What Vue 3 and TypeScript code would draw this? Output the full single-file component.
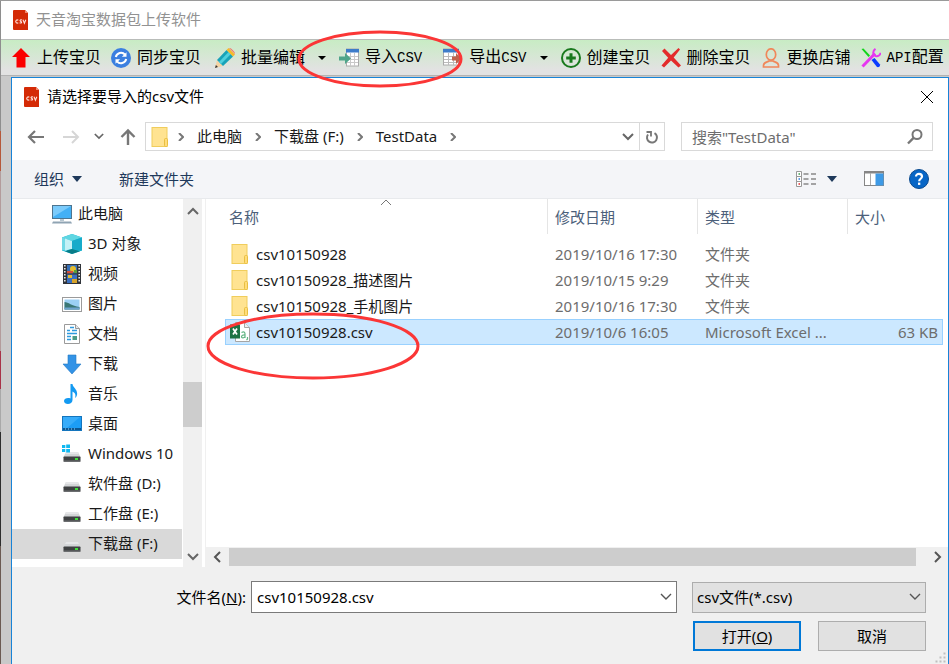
<script setup lang="ts">
import { ref } from 'vue'

interface Tool { icon: string; label: string; latin?: string; tail?: string; menu?: boolean; spaced?: boolean }
interface Place { icon: string; label: string; root?: boolean }
interface FileRow { icon: string; name: string; date: string; type: string; size: string }

const hdd = `<path d="M4 8h12l2.500 5h-17z" fill="#d3d5d7"/><path d="M4 8h12l1 2H3z" fill="#e6e7e8"/><rect x="1.500" y="12.500" width="17" height="5.500" rx=".8" fill="#3f4142"/><rect x="2" y="16.500" width="16" height="1.500" fill="#6c6e70"/><rect x="13" y="14" width="3" height="2" fill="#3ee03a"/>`

const icons: Record<string, string> = {
  csvApp: `<path d="M3 0h11l3 3v17H3a1 1 0 0 1-1-1V1a1 1 0 0 1 1-1z" fill="#d42a06"/><path d="M14 0l3 3h-3z" fill="#f08a70"/><path d="M7.300 10.200a1.600 1.600 0 1 0 0 2.600M11 10c-2-.8-2.600.8-1.200 1.400s.8 2.200-1.200 1.400M12 9.800l1.400 3.400 1.400-3.400" fill="none" stroke="#ffe3dc" stroke-width="1.100"/>`,
  upload: `<path d="M10 0l9 9h-4.500v10.500h-9V9H1z" fill="#fb0000"/>`,
  sync: `<circle cx="10" cy="10" r="10" fill="#3b7fe0"/><path d="M4.800 9a5.300 5.300 0 0 1 9.200-2.300M15.200 11a5.300 5.300 0 0 1-9.200 2.300" fill="none" stroke="#fff" stroke-width="2"/><path d="M15.500 4.200v4.600h-4.600zM4.500 15.800v-4.600h4.600z" fill="#fff"/>`,
  pencil: `<path d="M0 20l2-8 6 6z" fill="#f4d3a4"/><path d="M0 20l.9-3 2.100 2.100z" fill="#333"/><path d="M2 12L11.500 2l6.500 6.500L8 18z" fill="#18a3b8"/><path d="M4 14L13.500 4l2.200 2.200L6 16z" fill="#4fd0dd"/><path d="M11.500 2l2-2 6.500 6.500-2 2z" fill="#f6b92c"/><path d="M14 0c1.500-.8 6.800 4.500 6 6z" fill="#f0776c"/>`,
  importCsv: `<rect x="7.500" y="1" width="12" height="17" fill="#fff" stroke="#aaa"/><path d="M11.500 5v13M15.500 5v13M8 8.500h11M8 11.500h11M8 14.500h11" stroke="#c9c9c9"/><rect x="7" y="1" width="13" height="3.500" fill="#3d7cc9"/><path d="M0 8.500h6V5l6 5.500-6 5.500v-3.500H0z" fill="#4fa58a"/>`,
  exportCsv: `<rect x=".5" y="1" width="15" height="16" fill="#fff" stroke="#aaa"/><path d="M5.500 5v12M10.500 5v12M1 8.500h14M1 11.500h14M1 14.500h14" stroke="#bbb"/><rect x="0" y="1" width="16" height="3.500" fill="#3d7cc9"/><path d="M9 8.500h4V5l5.500 5.500L13 16v-3.500H9z" fill="#c0614c"/>`,
  add: `<circle cx="10" cy="10" r="9" fill="none" stroke="#19791d" stroke-width="2"/><path d="M10 5.200v9.600M5.200 10h9.600" stroke="#19791d" stroke-width="3"/>`,
  remove: `<path d="M1 3l2.500-2.500 6.500 6.500L17.500 0l1.500 1.500-6.300 8L20 17.500l-2.500 2L10 12.500l-7 7L.5 17.500l6.700-7.800z" fill="#e32b2b"/>`,
  person: `<ellipse cx="10" cy="6.500" rx="4.700" ry="5.700" fill="none" stroke="#f0875a" stroke-width="1.700"/><path d="M2.500 19v-1.500c0-3.500 4-3.300 5.500-4.500h4c1.500 1.200 5.500 1 5.500 4.500V19z" fill="none" stroke="#f0875a" stroke-width="1.700"/>`,
  tools: `<path d="M.5 1l2-.5 6.500 7-1.500 1.500z" fill="#12d41a"/><path d="M10.500 12l3-2 5.500 6.500c.5 2-1.500 3-3 2.500z" fill="#0b3cff"/><path d="M1.500 18.500L14 5.500" stroke="#e637f0" stroke-width="3"/><path d="M14.500.8c-3 2-3 6 .2 7.200 2.500.6 4.500-1 4.800-3.200" fill="none" stroke="#e637f0" stroke-width="2"/>`,
  folder: `<rect x="2" y=".5" width="15" height="19" fill="#ffe391" stroke="#f0cd5c"/><rect x="14.500" y="11.500" width="3" height="8" rx="1" fill="#ffdc7a" stroke="#e9bf41"/>`,
  excel: `<path d="M5.500.5h9l5 5v14h-14z" fill="#fff" stroke="#a5a5a5"/><path d="M14.500.5v5h5" fill="#eee" stroke="#a5a5a5"/><rect x="0" y="2.500" width="10" height="14" fill="#1d7345"/><path d="M3 6.500l4 6M7 6.500l-4 6" stroke="#fff" stroke-width="1.700"/><path d="M11.500 10.500c3-1.300 3.500 0 3.500 1.500v4M15 12.800c-4-.3-4.500 3-2 3 1.200 0 2-.7 2-1.500M17.500 15v2l-1 1" fill="none" stroke="#62b583" stroke-width="1.200"/>`,
  computer: `<rect x=".5" y="1.500" width="19" height="13" fill="#43b0f5" stroke="#4d7590"/><path d="M1 2h18L1 13z" fill="#7bcbfb"/><path d="M8 15h4v2H8z" fill="#b6c6d0"/><path d="M1 17.500h18l1 2H0z" fill="#8fa4b3"/>`,
  cube: `<path d="M10 0l10 3.500v13L10 20 0 16.500v-13z" fill="#17b6cf"/><path d="M10 0l10 3.500L10 7 0 3.500z" fill="#5fd6e2"/><path d="M0 3.500L5 5v12l-5-1z" fill="#72d9e6"/><path d="M3 4.500L10 7v8l-7 1.500z" fill="#c4f1f6"/><path d="M10 7l10-3.500v13L10 15z" fill="#17abca"/><path d="M3 17.200l7-2.200 8 2.200-8 2.800z" fill="#087c88"/>`,
  video: `<rect x="1" y="0" width="18" height="20" fill="#30343a"/><path d="M2.800 1v18M17.200 1v18" stroke="#e8e8e8" stroke-width="1.600" stroke-dasharray="1.500 1.500"/><rect x="5" y="1" width="10" height="8.300" fill="#3770b8"/><rect x="5" y="10.500" width="10" height="8.500" fill="#3a6fc0"/><circle cx="11" cy="5" r="3" fill="#e6bd2e"/><path d="M5 7h6v2.300H5z" fill="#d44f3a"/><path d="M6 11h4v3H6z" fill="#e6bd2e"/><path d="M10 15h5v4h-5z" fill="#d6a32b"/><path d="M12 6h3v3h-3z" fill="#5a9e3c"/>`,
  picture: `<rect x=".5" y="3.500" width="19" height="14" fill="#fff" stroke="#9b9b9b"/><rect x="2.500" y="5.500" width="15" height="10" fill="#9bd0f5"/><path d="M2.500 8c4 0 7 4 15 5v2.500h-15z" fill="#3a7775"/><path d="M2.500 13.500h15v2h-15z" fill="#6ea4cf"/>`,
  document: `<path d="M2.500.5h11l4 4v15h-15z" fill="#fff" stroke="#9a9a9a"/><path d="M13.500.5v4h4" fill="#e7e7e7" stroke="#9a9a9a"/><path d="M8 3.500h4M5 6.500h3M10 6.500h5M5 9.500h10M5 12.500h4M5 15.500h4" stroke="#2e9ade" stroke-width="1.500"/><path d="M10.500 12h4.500v4h-4.500z" fill="#4b9a87"/>`,
  download: `<path d="M6 1h8v9h5l-9 10-9-10h5z" fill="#3393e6" stroke="#2278c4" stroke-width=".6"/>`,
  music: `<path d="M8.500 0h2c.3 4 5.500 5 4.500 11-.4 1.500-1.200 2.500-2 3 1.300-4-.5-5.500-2.500-6.500V16c0 5-8.500 5-8.500 1 0-2.800 4-3.600 6.500-2.500z" fill="#139af2"/>`,
  desktop: `<rect x=".5" y="2.500" width="19" height="14" fill="#1c9df6" stroke="#1475bd"/><path d="M1 3h17L5 14H1z" fill="#37acfa"/><path d="M1 15h18" stroke="#0b5793" stroke-width="2"/><path d="M3 15h12" stroke="#9fd4f7" stroke-dasharray="1 2"/>`,
  windows: hdd + `<path d="M0 1h3.300v3H0zM4.200.5H8V4H4.200zM0 4.900h3.300v3H0zM4.200 4.900H8v3.500H4.200z" fill="#11b8f0"/>`,
  disk: hdd,
  left: `<path d="M18 10H3.500M9 4l-6 6 6 6" fill="none" stroke="#777" stroke-width="2.200"/>`,
  right: `<path d="M3 10h14.500M12 4l6 6-6 6" fill="none" stroke="#d6d6d6" stroke-width="2"/>`,
  up: `<path d="M10 18V4M3.500 10L10 3.500l6.500 6.500" fill="none" stroke="#777" stroke-width="2.400"/>`,
  refresh: `<path d="M12.500 6.200a5 5 0 1 1-6.500 1.300" fill="none" stroke="#777" stroke-width="2"/><path d="M4.500 5H9v4.500" fill="none" stroke="#777" stroke-width="1.800"/>`,
  search: `<circle cx="12" cy="7.500" r="4.500" fill="none" stroke="#777" stroke-width="2"/><path d="M8.800 10.700L3 16.500" stroke="#777" stroke-width="2.400"/>`,
  views: `<path d="M.5 2.500h5v5h-5zM.5 7.500h5v5h-5zM.5 12.500h5v5h-5z" fill="#fff" stroke="#999"/><path d="M2.500 5h1.500" stroke="#3a9b4e" stroke-width="1.500"/><path d="M2.500 10h1.500" stroke="#2a7de0" stroke-width="1.500"/><path d="M2.500 15h1.500" stroke="#e02a2a" stroke-width="1.500"/><path d="M7.500 5h5M15 5h5M7.500 10h5M15 10h5M7.500 15h5M15 15h5" stroke="#888" stroke-width="1.400"/>`,
  pane: `<rect x=".5" y="2.500" width="19" height="14" fill="#fff" stroke="#868686"/><path d="M1 3.500h18" stroke="#868686" stroke-width="2"/><path d="M6.500 4v12" stroke="#aaa"/><rect x="11.500" y="4.500" width="8" height="12" fill="#3e9ae6"/>`,
  help: `<circle cx="10" cy="10" r="9.500" fill="#0866c6" stroke="#0b4a8f"/><path d="M7 7.600C7 3.800 13 4 13 7.500c0 2.300-2.800 2.200-2.800 4.700" fill="none" stroke="#fff" stroke-width="2.200"/><rect x="9" y="13.600" width="2.300" height="2.300" fill="#fff"/>`,
}

const tools: Tool[] = [
  { icon: 'upload', label: '上传宝贝' },
  { icon: 'sync', label: '同步宝贝' },
  { icon: 'pencil', label: '批量编辑', menu: true },
  { icon: 'importCsv', label: '导入', latin: 'CSV', spaced: true },
  { icon: 'exportCsv', label: '导出', latin: 'CSV', menu: true },
  { icon: 'add', label: '创建宝贝' },
  { icon: 'remove', label: '删除宝贝' },
  { icon: 'person', label: '更换店铺' },
  { icon: 'tools', label: '', latin: 'API', tail: '配置' },
]

const crumbs = ['此电脑', '下载盘 (F:)', 'TestData']

const places: Place[] = [
  { icon: 'computer', label: '此电脑', root: true },
  { icon: 'cube', label: '3D 对象' },
  { icon: 'video', label: '视频' },
  { icon: 'picture', label: '图片' },
  { icon: 'document', label: '文档' },
  { icon: 'download', label: '下载' },
  { icon: 'music', label: '音乐' },
  { icon: 'desktop', label: '桌面' },
  { icon: 'windows', label: 'Windows 10' },
  { icon: 'disk', label: '软件盘 (D:)' },
  { icon: 'disk', label: '工作盘 (E:)' },
  { icon: 'disk', label: '下载盘 (F:)' },
]
const place = ref('下载盘 (F:)')

const files: FileRow[] = [
  { icon: 'folder', name: 'csv10150928', date: '2019/10/16 17:30', type: '文件夹', size: '' },
  { icon: 'folder', name: 'csv10150928_描述图片', date: '2019/10/15 9:29', type: '文件夹', size: '' },
  { icon: 'folder', name: 'csv10150928_手机图片', date: '2019/10/16 17:30', type: '文件夹', size: '' },
  { icon: 'excel', name: 'csv10150928.csv', date: '2019/10/6 16:05', type: 'Microsoft Excel ...', size: '63 KB' },
]
const fileName = ref('csv10150928.csv')
const query = ref('')
const filter = ref('csv')
</script>

<template>
  <div class="app">
    <header class="app-title">
      <svg class="icon" viewBox="0 0 20 20" v-html="icons.csvApp"></svg>
      <span class="label">天音淘宝数据包上传软件</span>
    </header>

    <nav class="toolbar">
      <div v-for="t in tools" :key="t.icon" class="tool-group" :class="{ split: t.menu, spaced: t.spaced }">
        <button class="tool" type="button">
          <svg class="icon" viewBox="0 0 20 20" v-html="icons[t.icon]"></svg>
          <span class="label">{{ t.label }}<span v-if="t.latin" class="latin">{{ t.latin }}</span>{{ t.tail }}</span>
        </button>
        <button v-if="t.menu" class="tool-menu" type="button" :aria-label="t.label">
          <svg class="tool-caret" viewBox="0 0 8 4"><path d="M0 0h8L4 4z" /></svg>
        </button>
      </div>
      <svg class="mark mark-import" viewBox="0 0 166 58" preserveAspectRatio="none">
        <ellipse cx="83" cy="29" rx="81" ry="27" />
      </svg>
    </nav>

    <main class="workspace">
      <section class="dialog" role="dialog" aria-labelledby="dialog-title">
        <header class="dialog-title">
          <svg class="icon" viewBox="0 0 20 20" v-html="icons.csvApp"></svg>
          <h1 id="dialog-title" class="label">请选择要导入的csv文件</h1>
          <button class="close" type="button" aria-label="关闭">
            <svg viewBox="0 0 12 12"><path d="M0 0l12 12M12 0L0 12" /></svg>
          </button>
        </header>

        <div class="nav-row">
          <div class="history">
            <button type="button" aria-label="后退"><svg class="icon" viewBox="0 0 20 20" v-html="icons.left"></svg></button>
            <button type="button" aria-label="前进" disabled><svg class="icon" viewBox="0 0 20 20" v-html="icons.right"></svg></button>
            <button type="button" aria-label="最近"><svg class="chev small" viewBox="0 0 12 8"><path d="M1 1l5 5 5-5" /></svg></button>
            <button type="button" aria-label="上移"><svg class="icon" viewBox="0 0 20 20" v-html="icons.up"></svg></button>
          </div>
          <div class="address">
            <svg class="icon" viewBox="0 0 20 20" v-html="icons.folder"></svg>
            <svg class="sep" viewBox="0 0 6 8"><path d="M1 0l4 4-4 4" /></svg>
            <template v-for="c in crumbs" :key="c">
              <a class="label" href="#">{{ c }}</a>
              <svg class="sep" viewBox="0 0 6 8"><path d="M1 0l4 4-4 4" /></svg>
            </template>
            <button class="addr-drop" type="button" aria-label="历史位置">
              <svg class="chev" viewBox="0 0 12 8"><path d="M1 1l5 5 5-5" /></svg>
            </button>
            <button class="refresh" type="button" aria-label="刷新">
              <svg class="icon" viewBox="0 0 20 20" v-html="icons.refresh"></svg>
            </button>
          </div>
          <label class="search">
            <input v-model="query" type="text" placeholder="搜索&quot;TestData&quot;" aria-label="搜索" />
            <svg class="icon" viewBox="0 0 20 20" v-html="icons.search"></svg>
          </label>
        </div>

        <div class="commands">
          <button type="button">组织 <svg class="cmd-caret" viewBox="0 0 10 6"><path d="M0 0h10L5 6z" /></svg></button>
          <button class="new-folder" type="button">新建文件夹</button>
          <button class="views" type="button" aria-label="更改视图">
            <svg class="icon" viewBox="0 0 20 20" v-html="icons.views"></svg>
            <svg class="cmd-caret" viewBox="0 0 10 6"><path d="M0 0h10L5 6z" /></svg>
          </button>
          <button type="button" aria-label="预览窗格"><svg class="icon" viewBox="0 0 20 20" v-html="icons.pane"></svg></button>
          <button type="button" aria-label="帮助"><svg class="icon" viewBox="0 0 20 20" v-html="icons.help"></svg></button>
        </div>

        <div class="content">
          <ul class="tree">
            <li v-for="p in places" :key="p.label">
              <button type="button" :class="{ root: p.root, current: p.label === place }" @click="place = p.label">
                <svg class="icon" viewBox="0 0 20 20" v-html="icons[p.icon]"></svg>
                <span class="label">{{ p.label }}</span>
              </button>
            </li>
          </ul>
          <div class="vbar">
            <svg class="chev" viewBox="0 0 12 8"><path d="M1 7l5-5 5 5" /></svg>
            <div class="vtrack"><div class="vbefore"></div><div class="vthumb"></div><div class="vafter"></div></div>
            <svg class="chev" viewBox="0 0 12 8"><path d="M1 1l5 5 5-5" /></svg>
          </div>

          <div class="files">
            <table>
              <colgroup><col /><col class="c-date" /><col class="c-type" /><col class="c-size" /></colgroup>
              <thead>
                <tr>
                  <th>名称<svg class="sort" viewBox="0 0 12 7"><path d="M1 6l5-5 5 5" /></svg></th>
                  <th>修改日期</th>
                  <th>类型</th>
                  <th>大小</th>
                </tr>
              </thead>
              <tbody>
                <tr v-for="f in files" :key="f.name" :class="{ selected: f.name === fileName }" @click="fileName = f.name">
                  <td><div class="name"><svg class="icon" viewBox="0 0 20 20" v-html="icons[f.icon]"></svg><span>{{ f.name }}</span></div></td>
                  <td>{{ f.date }}</td>
                  <td>{{ f.type }}</td>
                  <td class="size">{{ f.size }}</td>
                </tr>
              </tbody>
            </table>
            <div class="hbar">
              <svg class="hchev" viewBox="0 0 8 12"><path d="M7 1L2 6l5 5" /></svg>
              <div class="hthumb"></div>
              <svg class="hchev" viewBox="0 0 8 12"><path d="M1 1l5 5-5 5" /></svg>
            </div>
            <svg class="mark mark-file" viewBox="0 0 214 68" preserveAspectRatio="none">
              <ellipse cx="107" cy="34" rx="105" ry="32" />
            </svg>
          </div>
        </div>

        <form class="footer" @submit.prevent>
          <label for="file-name">文件名(<u>N</u>):</label>
          <div class="combo">
            <input id="file-name" v-model="fileName" type="text" />
            <svg class="thin" viewBox="0 0 12 8"><path d="M1 1l5 5 5-5" /></svg>
          </div>
          <div class="combo filter">
            <select v-model="filter" aria-label="文件类型"><option value="csv">csv文件(*.csv)</option></select>
            <svg class="thin" viewBox="0 0 12 8"><path d="M1 1l5 5 5-5" /></svg>
          </div>
          <div class="actions">
            <button class="primary" type="submit">打开(<u>O</u>)</button>
            <button type="button">取消</button>
          </div>
        </form>
        <svg class="grip" viewBox="0 0 12 12"><path d="M8 0h3v3H8zM4 4h3v3H4zM8 4h3v3H8zM0 8h3v3H0zM4 8h3v3H4zM8 8h3v3H8z" /></svg>
      </section>
    </main>
  </div>
</template>

<style>
body {
  margin: 0;
}
</style>

<style scoped>
.app {
  box-sizing: border-box;
  display: flex;
  flex-direction: column;
  min-height: 100vh;
  overflow: hidden;
  border-top: 1px solid #9a9a9a;
  background: linear-gradient(#8e8e8e 0 130px, #b5583a 130px 170px, #b39c9c 170px 350px, #a83248 350px 388px, #a8a8a8 388px 431px, #2d2d2d 431px 545px, #6b5a52 545px) 0 0 / 1px 100% no-repeat, #c9c9c9;
  padding-left: 1px;
  color: #1a1a1a;
  font-family: "Noto Sans", "Noto Sans CJK SC", sans-serif;
  font-size: 15px;
  line-height: 20px;
}
button, input, select {
  margin: 0;
  padding: 0;
  border: 0;
  background: none;
  color: inherit;
  font: inherit;
}
svg {
  display: block;
  flex: none;
}
.icon {
  width: 20px;
  height: 20px;
}
.label {
  padding-bottom: 2px;
}
.app-title {
  display: flex;
  align-items: center;
  gap: 5px;
  height: 38px;
  padding-left: 10px;
  background: #fff;
  color: #929292;
}
.toolbar {
  position: relative;
  display: flex;
  height: 35px;
  padding-left: 5px;
  border-top: 1px solid #b9bcb9;
  border-bottom: 1px solid #b3b3b3;
  background: linear-gradient(#c8ecc4, #e2e2e2 85%);
  color: #000;
}
.tool-group {
  display: flex;
  flex: none;
}
.tool-group.split {
  margin-left: 4px;
}
.tool-group.spaced {
  margin-right: 7px;
}
.tool {
  display: flex;
  align-items: center;
  gap: 6px;
  padding: 0 5px;
  font-size: 16px;
  white-space: nowrap;
}
.latin {
  font-family: "Liberation Mono", monospace;
  font-size: 14px;
}
.tool-menu {
  display: flex;
  align-items: center;
  justify-content: center;
  width: 24px;
}
.tool-caret {
  width: 8px;
  height: 4px;
}
.mark {
  position: absolute;
  z-index: 5;
  pointer-events: none;
}
.mark ellipse {
  fill: none;
  stroke: #fb3636;
  stroke-width: 3;
}
.mark-import {
  left: 296px;
  top: -10px;
  width: 166px;
  height: 58px;
}
.mark-file {
  left: 0;
  top: 113px;
  width: 214px;
  height: 68px;
}
.workspace {
  display: flex;
  flex: 1;
  padding: 1px 0 0 10px;
}
.dialog {
  position: relative;
  display: flex;
  flex: 1;
  flex-direction: column;
  min-width: 0;
  border: 1px solid #1883d7;
  border-bottom: 0;
  background: #fff;
}
.dialog-title {
  display: flex;
  align-items: center;
  gap: 5px;
  height: 38px;
  padding: 0 15px 0 10px;
  color: #000;
}
.dialog-title h1 {
  flex: 1;
  margin: 0;
  font-size: 15px;
  font-weight: 400;
}
.close svg {
  width: 12px;
  height: 12px;
  fill: none;
  stroke: #000;
}
.nav-row {
  display: flex;
  align-items: center;
  gap: 16px;
  padding: 6px 15px 9px 14px;
}
.history {
  display: flex;
  align-items: center;
  gap: 14px;
  margin-right: -9px;
}
.chev {
  width: 12px;
  height: 8px;
  fill: none;
  stroke: #666;
  stroke-width: 2;
}
.chev.small {
  width: 10px;
  height: 7px;
}
.address {
  box-sizing: border-box;
  display: flex;
  flex: 1;
  align-items: center;
  gap: 13px;
  height: 29px;
  padding-left: 4px;
  border: 1px solid #d9d9d9;
}
.address a {
  color: #1a1a1a;
  text-decoration: none;
  white-space: nowrap;
}
.sep {
  width: 6px;
  height: 8px;
  fill: none;
  stroke: #777;
  stroke-width: 2;
}
.address > .icon {
  margin-right: -5px;
}
.addr-drop {
  margin-left: auto;
  margin-right: -8px;
}
.refresh {
  display: flex;
  align-items: center;
  align-self: stretch;
  padding: 0 2px;
  border-left: 1px solid #d9d9d9;
}
.search {
  box-sizing: border-box;
  display: flex;
  align-items: center;
  width: 252px;
  height: 29px;
  padding: 0 7px 0 10px;
  border: 1px solid #d9d9d9;
}
.search input {
  flex: 1;
  min-width: 0;
  outline: 0;
}
.search input::placeholder {
  color: #6d6d6d;
  opacity: 1;
}
.commands {
  display: flex;
  align-items: center;
  gap: 25px;
  height: 38px;
  padding: 0 19px 0 22px;
  border-bottom: 1px solid #e8eaed;
  background: #f4f5f8;
  color: #1e395b;
}
.commands button {
  display: flex;
  align-items: center;
  gap: 8px;
}
.commands .new-folder {
  margin-left: 12px;
}
.commands .views {
  gap: 11px;
  margin-right: 2px;
  margin-left: auto;
}
.cmd-caret {
  width: 10px;
  height: 6px;
  fill: #1e395b;
}
.content {
  display: flex;
  flex: 1;
}
.tree {
  width: 170px;
  margin: 0;
  padding: 0 0 8px;
  list-style: none;
}
.tree button {
  display: flex;
  align-items: center;
  gap: 6px;
  width: 100%;
  height: 30px;
  padding-left: 50px;
  white-space: nowrap;
}
.tree button.root {
  padding-left: 40px;
}
.tree button.current {
  background: #d9d9d9;
}
.vbar {
  display: flex;
  flex-direction: column;
  align-items: center;
  width: 19px;
  margin-left: 1px;
  padding: 8px 0 6px;
  background: #f0f0f0;
}
.vtrack {
  display: flex;
  flex: 1;
  flex-direction: column;
  align-self: stretch;
}
.vbefore {
  flex: 167;
}
.vthumb {
  flex: 45;
  background: #cdcdcd;
}
.vafter {
  flex: 126;
}
.files {
  position: relative;
  display: flex;
  flex: 1;
  flex-direction: column;
  justify-content: space-between;
  min-width: 0;
  margin-left: 3px;
  border-left: 1px solid #f0f0f0;
}
table {
  width: auto;
  margin: 0 5px 0 19px;
  border-spacing: 0;
  table-layout: fixed;
  color: #6d6d6d;
}
.c-date, .c-type {
  width: 150px;
}
.c-size {
  width: 96px;
}
th {
  position: relative;
  height: 35px;
  padding: 0 0 0 7px;
  border-left: 1px solid #e5e5e5;
  color: #4c607a;
  font-weight: 400;
  text-align: left;
}
th:first-child {
  padding-left: 4px;
  border-left: 0;
}
.sort {
  position: absolute;
  top: 0;
  left: 50%;
  width: 12px;
  height: 7px;
  margin-left: -6px;
  fill: none;
  stroke: #777;
}
tbody::before {
  content: "";
  display: block;
  height: 7px;
}
td {
  height: 26px;
  padding: 0 0 0 8px;
  white-space: nowrap;
}
td:first-child {
  padding-left: 5px;
  color: #1a1a1a;
}
td.size {
  padding-right: 5px;
  text-align: right;
}
.name {
  display: flex;
  align-items: center;
  gap: 6px;
}
tr.selected {
  outline: 1px solid #99d1ff;
  outline-offset: -1px;
  background: #cce8ff;
}
.hbar {
  display: flex;
  align-items: center;
  gap: 8px;
  height: 20px;
  padding: 0 6px 0 7px;
  background: #f0f0f0;
}
.hchev {
  width: 8px;
  height: 12px;
  fill: none;
  stroke: #555;
  stroke-width: 2;
}
.hthumb {
  flex: 1;
  height: 18px;
  margin-right: 10px;
  background: #cdcdcd;
}
.footer {
  display: grid;
  grid-template-columns: 234px 1fr 234px;
  align-items: center;
  gap: 8px 0;
  padding: 14px 22px 13px 0;
  background: #f0f0f0;
  color: #000;
}
.footer > label {
  text-align: right;
}
.combo {
  display: grid;
  align-items: center;
  margin: 0 15px 0 5px;
}
.combo.filter {
  margin: 0;
}
.combo > * {
  grid-area: 1 / 1;
}
.combo input, .combo select {
  box-sizing: border-box;
  width: 100%;
  height: 32px;
  padding: 0 24px 0 5px;
  border: 1px solid #7a7a7a;
  border-radius: 0;
  outline: 0;
  background: #fff;
  appearance: none;
}
.combo select {
  height: 31px;
  padding-left: 4px;
  border-color: #adadad;
  background: #e1e1e1;
}
.thin {
  justify-self: end;
  width: 12px;
  height: 8px;
  margin-right: 5px;
  fill: none;
  stroke: #555;
  stroke-width: 1.4;
  pointer-events: none;
}
.actions {
  display: flex;
  grid-column: 3;
  justify-content: flex-end;
  gap: 17px;
}
.actions button {
  box-sizing: border-box;
  width: 108px;
  height: 30px;
  border: 1px solid #adadad;
  background: #e1e1e1;
}
.actions .primary {
  border: 2px solid #0078d7;
}
.grip {
  position: absolute;
  right: 1px;
  bottom: 0;
  width: 12px;
  height: 12px;
  fill: #bfbfbf;
  stroke: #f0f0f0;
}
</style>
